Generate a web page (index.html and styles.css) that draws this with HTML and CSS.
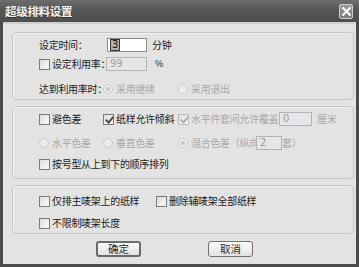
FILE: index.html
```html
<!DOCTYPE html>
<html lang="zh">

<head>
    <meta charset="UTF-8">
    <title>超级排料设置</title>
    <link rel="stylesheet" href="styles.css">
</head>

<body>
    <div class="window">
        <div class="titlebar">
            <span class="title">超级排料设置</span>
            <span class="close">
                <svg width="11" height="11" viewBox="0 0 11 11">
                    <path d="M1.5 1.5 L9.5 9.5 M9.5 1.5 L1.5 9.5" stroke="#fff" stroke-width="2" />
                </svg>
            </span>
        </div>

        <div class="content">
            <div class="group g1">
                <div class="row">
                    <span class="cell w68">设定时间：</span>
                    <span class="input w40"><span class="sel">3</span></span>
                    <span class="unit">分钟</span>
                </div>
                <div class="row r2">
                    <span class="cell w67"><span class="check"></span>设定利用率：</span>
                    <span class="input w41 disabled">99</span>
                    <span class="unit pct">%</span>
                </div>
                <div class="row r3">
                    <span class="cell w64">达到利用率时：</span>
                    <span class="cell w75 off"><span class="radio on"></span>采用继续</span>
                    <span class="cell off"><span class="radio"></span>采用退出</span>
                </div>
            </div>

            <div class="group g2">
                <div class="row">
                    <span class="cell w64"><span class="check"></span>避色差</span>
                    <span class="cell w75"><span class="check ticked"></span>纸样允许倾斜</span>
                    <span class="cell w101 off"><span class="check ticked dim"></span>水平件套间允许覆盖</span>
                    <span class="input w33 disabled">0</span>
                    <span class="unit off">厘米</span>
                </div>
                <div class="row r2b">
                    <span class="cell w64 off"><span class="radio"></span>水平色差</span>
                    <span class="cell w75 off"><span class="radio"></span>垂直色差</span>
                    <span class="cell w78 off"><span class="radio on"></span>混合色差（纵向</span>
                    <span class="input w26 disabled">2</span>
                    <span class="off">套）</span>
                </div>
                <div class="row r3b">
                    <span class="cell"><span class="check"></span>按号型从上到下的顺序排列</span>
                </div>
            </div>

            <div class="group g3">
                <div class="row">
                    <span class="cell w117"><span class="check"></span>仅排主唛架上的纸样</span>
                    <span class="cell"><span class="check"></span>删除辅唛架全部纸样</span>
                </div>
                <div class="row r2c">
                    <span class="cell"><span class="check"></span>不限制唛架长度</span>
                </div>
            </div>

            <div class="buttons">
                <button class="btn default">确定</button>
                <button class="btn">取消</button>
            </div>
        </div>
    </div>
</body>

</html>
```

FILE: styles.css
```css
body {
    margin: 0;
    font-family: "Noto Sans CJK SC", "Noto Sans", sans-serif;
    font-size: 10px;
    letter-spacing: -0.3px;
    color: #1c1c1c;
}

.window {
    width: 359px;
    height: 267px;
    box-sizing: border-box;
    background: #4b4b4b;
    padding: 0 3px 3px 3px;
    display: flex;
    flex-direction: column;
}

.titlebar {
    height: 22px;
    margin: 0 -3px;
    padding: 0 6px 0 5px;
    display: flex;
    align-items: center;
    justify-content: space-between;
    background: linear-gradient(#6e6e6e, #565656 45%, #4e4e4e);
}

.title {
    color: #f4f4f4;
    font-weight: bold;
    font-size: 11.5px;
    letter-spacing: -0.3px;
    line-height: 14px;
    text-shadow: 0 1px 0 #333;
}

.close {
    width: 14px;
    height: 15px;
    box-sizing: border-box;
    border: 1px solid #cfcfcf;
    border-radius: 2px;
    background: linear-gradient(#9a9a9a, #7a7a7a);
    display: flex;
    align-items: center;
    justify-content: center;
    margin-top: 1px;
}

.content {
    flex: 1;
    background: #e3e3e3;
    border-top: 2px solid #d0d0d0;
    padding: 8px 2px 0 9px;
    display: flex;
    flex-direction: column;
}

.group {
    border: 1px solid #c6c6c6;
    border-radius: 4px;
    box-shadow: inset 1px 1px 0 #f2f2f2;
    box-sizing: border-box;
    padding-left: 26px;
    display: flex;
    flex-direction: column;
}

.g1 {
    height: 68px;
    padding-top: 5px;
}

.g2 {
    height: 73px;
    margin-top: 6px;
    padding-top: 5px;
}

.g3 {
    height: 49px;
    margin-top: 6px;
    padding-top: 8px;
}

.row {
    display: flex;
    align-items: center;
    height: 14px;
    line-height: 14px;
    white-space: nowrap;
}

.r2 { margin-top: 5px; }
.r3 { margin-top: 11px; }
.r2b { margin-top: 10px; }
.r3b { margin-top: 7px; }
.r2c { margin-top: 8px; }

.cell {
    display: flex;
    align-items: center;
}

.w64 { width: 64px; }
.w67 { width: 67px; }
.w68 { width: 68px; }
.w75 { width: 75px; }
.w78 { width: 78px; }
.w101 { width: 101px; }
.w117 { width: 117px; }

.off {
    color: #a9a9a9;
}

.input {
    height: 14px;
    box-sizing: border-box;
    border: 1px solid #8c8c8c;
    background: #fff;
    font-family: "DejaVu Sans", sans-serif;
    font-size: 10px;
    letter-spacing: 0;
    line-height: 12px;
    padding-left: 3px;
    display: flex;
    align-items: center;
}

.sel {
    display: inline-block;
    height: 10px;
    line-height: 10px;
    padding: 0 1px;
    border: 1px solid #333;
    background: #b0b0b0;
    color: #111;
    margin-left: -1px;
}

.input.disabled {
    border-color: #b4b4b4;
    background: #e6e6e6;
    color: #a0a0a0;
}

.w26 { width: 26px; }
.w33 { width: 33px; }
.w40 { width: 40px; }
.w41 { width: 41px; }

.unit {
    margin-left: 5px;
}

.pct {
    margin-left: 8px;
    font-size: 9px;
}

.check {
    width: 11px;
    height: 11px;
    box-sizing: border-box;
    border: 1px solid #7a7a7a;
    background: linear-gradient(135deg, #dcdcdc, #fbfbfb);
    margin-right: 2px;
    flex: none;
    position: relative;
}

.check.ticked::after {
    content: "";
    position: absolute;
    left: 3px;
    top: 0px;
    width: 3px;
    height: 6px;
    border: solid #4a4a4a;
    border-width: 0 2px 2px 0;
    transform: rotate(40deg);
}

.check.dim {
    border-color: #bcbcbc;
}

.check.dim::after {
    border-color: #b0b0b0;
}

.radio {
    width: 10px;
    height: 10px;
    box-sizing: border-box;
    border: 1px solid #cdcdcd;
    border-radius: 50%;
    background: #ececec;
    margin-right: 3px;
    flex: none;
    position: relative;
}

.radio.on::after {
    content: "";
    position: absolute;
    left: 2px;
    top: 2px;
    width: 4px;
    height: 4px;
    border-radius: 50%;
    background: #c4c4c4;
}

.buttons {
    display: flex;
    padding-left: 84px;
    margin-top: 7px;
}

.btn {
    font-family: "Noto Sans CJK SC", sans-serif;
    font-size: 10.5px;
    line-height: 12px;
    color: #2a2a2a;
    width: 45px;
    height: 16px;
    padding: 0;
    box-sizing: border-box;
    border: 1px solid #6f6f6f;
    border-radius: 3px;
    background: linear-gradient(#fafafa, #e2e2e2);
    margin-right: 67px;
}

.btn.default {
    border: 2px solid #6a6a6a;
}
```
